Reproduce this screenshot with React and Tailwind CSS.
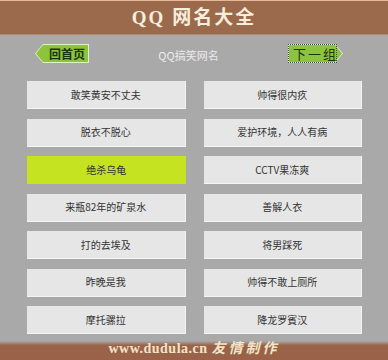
const names = [
  "敢笑黄安不丈夫",
  "帅得很内疚",
  "脱衣不脱心",
  "爱护环境，人人有病",
  "绝杀乌龟",
  "CCTV果冻爽",
  "来瓶82年的矿泉水",
  "善解人衣",
  "打的去埃及",
  "将男踩死",
  "昨晚是我",
  "帅得不敢上厕所",
  "摩托骡拉",
  "降龙罗賓汉",
];

const cjk = { fontFamily: '"Noto Sans CJK SC", "Liberation Sans", sans-serif' };
const serif = { fontFamily: '"Liberation Serif", "Noto Sans CJK SC", serif' };

const App = () => {
  return (
    <div className="w-[388px] h-[360px] flex flex-col bg-[#a9a9a9] overflow-hidden">
      <div className="h-[35px] shrink-0 flex items-center justify-center bg-[#9b6a4c] border-t border-[#e6b897] border-b border-b-[#b08a6c]">
        <h1
          className="text-[19px] font-bold text-[#f6eedc] tracking-[2px] leading-none"
          style={serif}
        >
          QQ 网名大全
        </h1>
      </div>

      <div className="flex items-center h-[19px] mt-[9px] shrink-0">
        <div className="ml-[35px] w-[54px] h-[19px] bg-[#e4f0c6] p-px [clip-path:polygon(8px_0,100%_0,100%_100%,8px_100%,0_50%)]">
          <div className="w-full h-full bg-[#8cc53c] flex items-center justify-end pr-[3px] [clip-path:polygon(7px_0,100%_0,100%_100%,7px_100%,0_50%)]">
            <span className="text-[12px] font-bold text-[#1c330c] leading-none" style={cjk}>
              回首页
            </span>
          </div>
        </div>
        <div className="flex-1 flex justify-center pt-[3px]">
          <span className="text-[11px] text-[#ececec] leading-none" style={cjk}>
            QQ搞笑网名
          </span>
        </div>
        <div className="mr-[45px] relative w-[55px] h-[19px]">
          <div className="w-full h-full bg-[#e4f0c6] p-px [clip-path:polygon(0_0,calc(100%-8px)_0,100%_50%,calc(100%-8px)_100%,0_100%)]">
            <div className="w-full h-full bg-[#8cc53c] flex items-center pl-[4px] [clip-path:polygon(0_0,calc(100%-7px)_0,100%_50%,calc(100%-7px)_100%,0_100%)]">
              <span className="text-[13px] text-[#1c330c] tracking-[2px] leading-none" style={cjk}>
                下一组
              </span>
            </div>
          </div>
          <div className="absolute top-0 left-0 w-[49px] h-[19px] border border-dotted border-[#4a4a4a]" />
        </div>
      </div>

      <div className="grid grid-cols-2 gap-x-[18px] gap-y-[9.5px] pl-[27px] pr-[26px] mt-[18px]">
        {names.map((n, i) => (
          <div
            key={i}
            className={
              i === 4
                ? "h-[28px] flex items-center justify-center bg-[#c6e321]"
                : "h-[28px] flex items-center justify-center bg-[#e6e6e6] border-r border-b border-[#f4f4f4]"
            }
          >
            <span className="text-[10px] text-[#333333] leading-none" style={cjk}>
              {n}
            </span>
          </div>
        ))}
      </div>

      <div className="flex-1" />
      <div className="h-[4px] shrink-0 bg-gradient-to-b from-[#a9a9a9] to-[#9a6a50]" />
      <div className="h-[15px] shrink-0 bg-[#9a6349] flex items-start justify-center">
        <span
          className="text-[14px] font-bold text-[#f2e4c8] leading-none -mt-[3px] tracking-[0.5px]"
          style={serif}
        >
          www.dudula.cn <span className="italic tracking-[3px]">友情制作</span>
        </span>
      </div>
    </div>
  );
};

export default App;
